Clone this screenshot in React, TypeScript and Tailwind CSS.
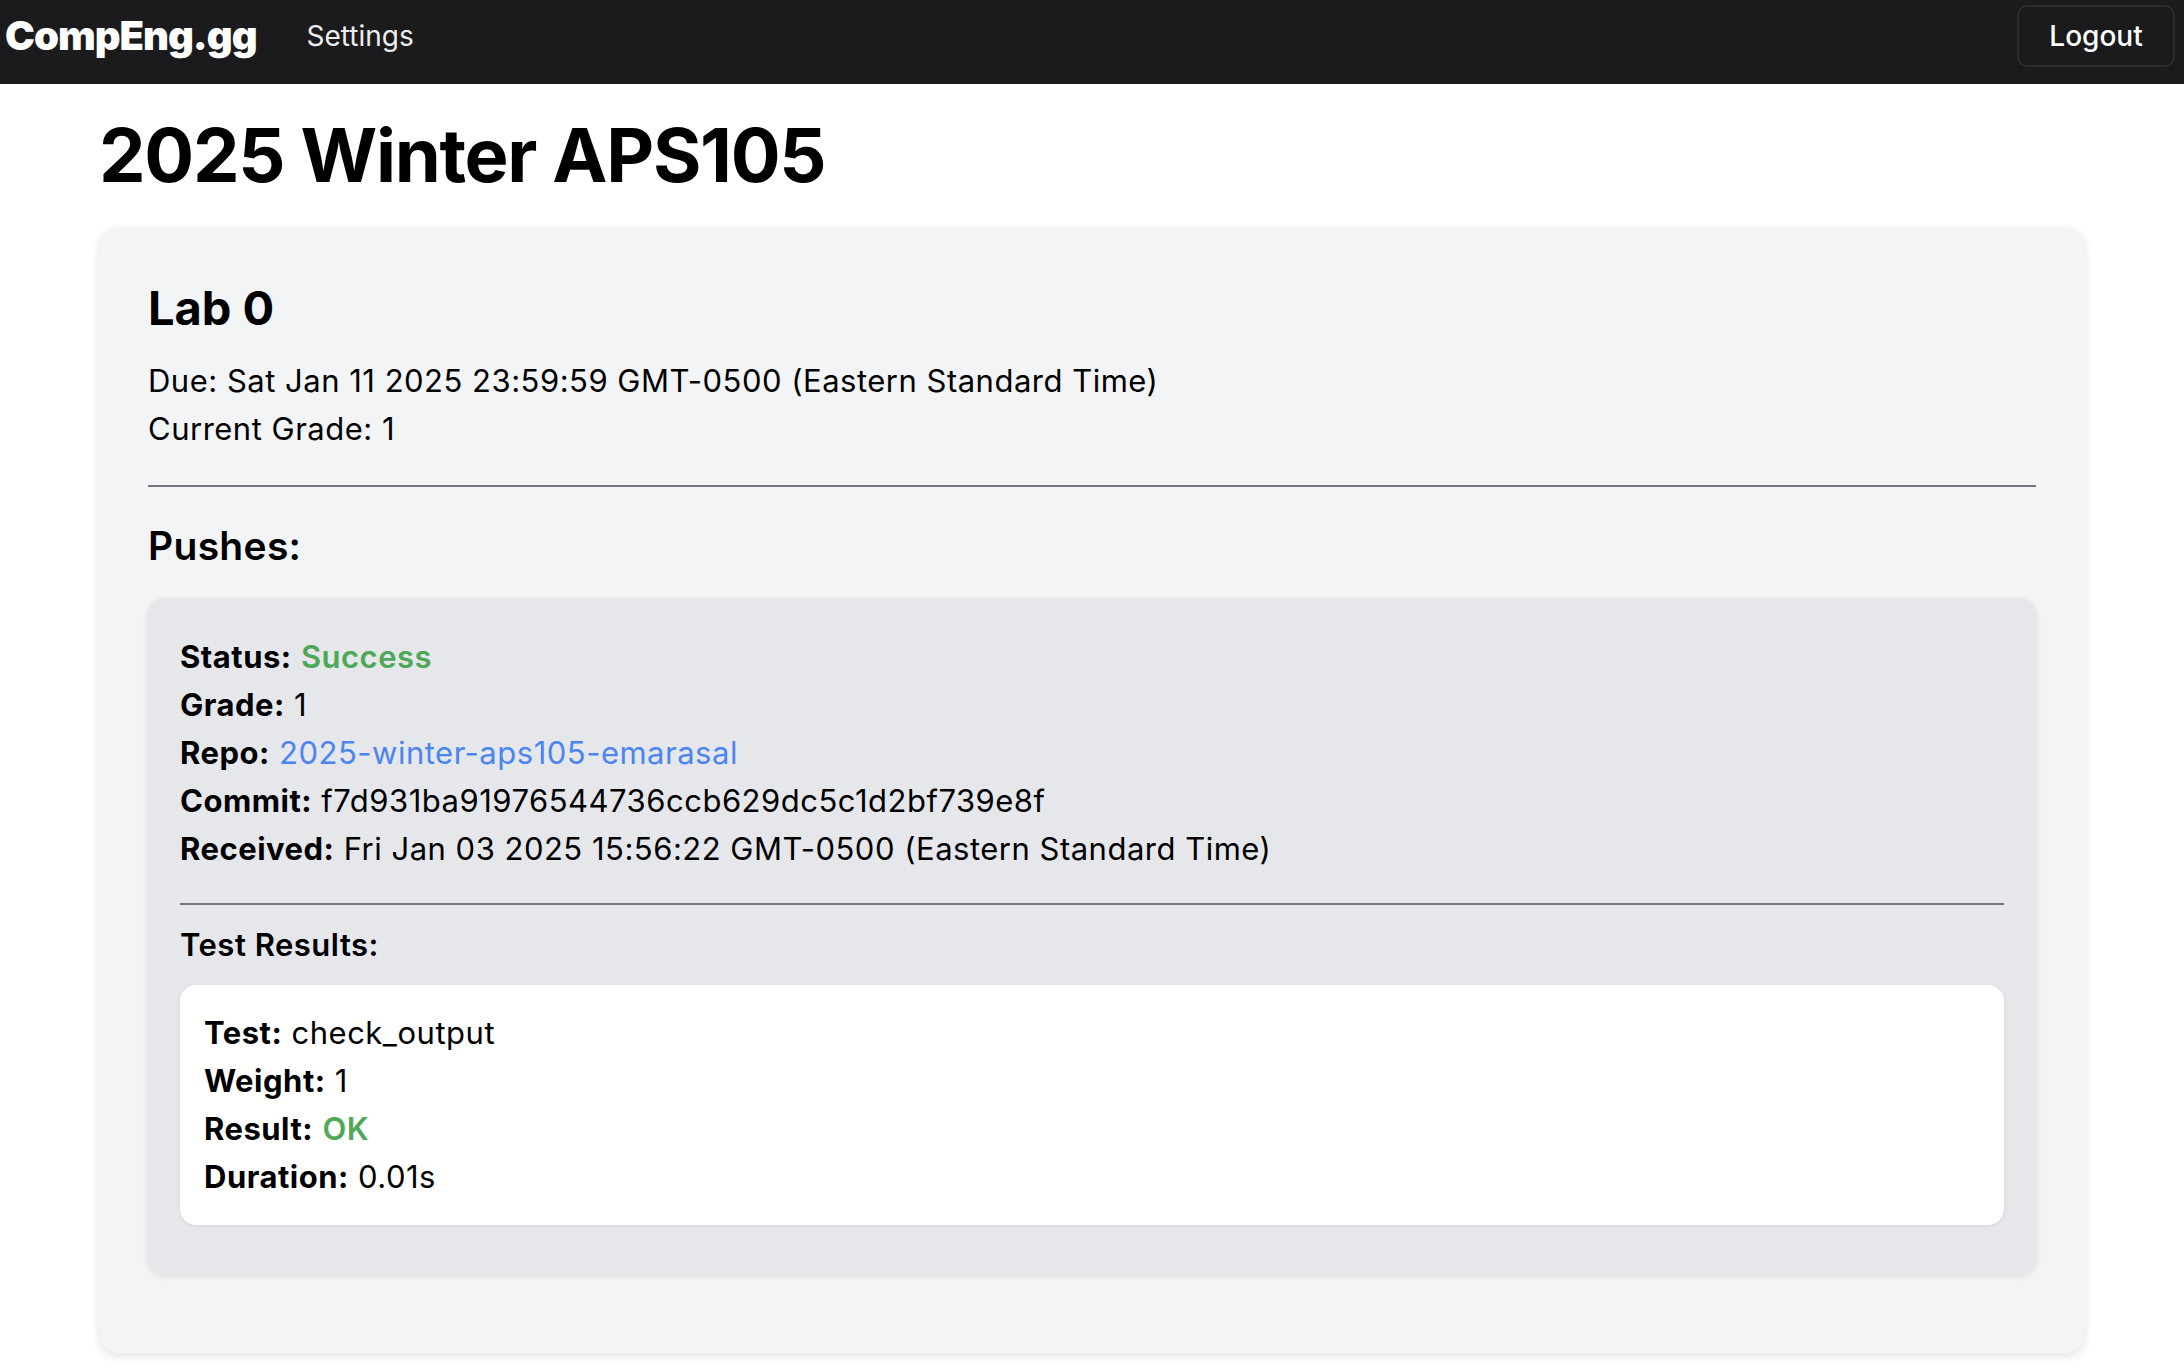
import React from 'react';

const push = {
    status: 'Success',
    grade: 1,
    repo: '2025-winter-aps105-emarasal',
    commit: 'f7d931ba91976544736ccb629dc5c1d2bf739e8f',
    received: 'Fri Jan 03 2025 15:56:22 GMT-0500 (Eastern Standard Time)',
    tests: [
        { name: 'check_output', weight: 1, result: 'OK', duration: '0.01s' }
    ]
};

const Field = ({ label, children }: { label: string, children: React.ReactNode }) => (
    <div>
        <span className="font-bold">{label}:</span> {children}
    </div>
);

const Navbar = () => (
    <nav className="h-[84px] bg-[#1b1b1d] pt-[5px] pl-[5px] pr-[9px]">
        <div className="flex h-[62px] items-center justify-between">
            <div className="flex items-center gap-[50px]">
                <a href="#" className="text-[40px] font-black tracking-tight text-white">CompEng.gg</a>
                <a href="#" className="text-[28px] text-[#ececec]">Settings</a>
            </div>
            <button className="h-[62px] w-[158px] rounded-[10px] border-2 border-[#2c2c2e] text-[28px] font-medium text-white">
                Logout
            </button>
        </div>
    </nav>
);

const App = () => {
    return (
        <div className="min-h-screen bg-white text-black font-[family-name:Inter,sans-serif]">
            <Navbar />

            <main className="mx-auto w-[1986px]">
                <h1 className="mt-[30px] mb-[32px] text-[74px] leading-[82px] font-bold tracking-[-1.3px]">2025 Winter APS105</h1>

                <section className="rounded-[20px] bg-[#f3f4f6] px-[49px] pt-[48px] pb-[79px] shadow-[0_3px_10px_rgba(0,0,0,0.12)]">
                    <h2 className="text-[47px] leading-[63px] font-bold">Lab 0</h2>
                    <div className="mt-[18px] text-[31px] leading-[48px] tracking-[0.5px]">
                        <p>Due: Sat Jan 11 2025 23:59:59 GMT-0500 (Eastern Standard Time)</p>
                        <p>Current Grade: 1</p>
                    </div>

                    <div className="mt-[32px] h-[2px] bg-[#72747f]" />

                    <h3 className="mt-[31px] text-[39px] leading-[55px] font-semibold tracking-[0.3px]">Pushes:</h3>

                    {/* Push card */}
                    <div className="mt-[25px] rounded-[16px] bg-[#e5e7eb] px-[32px] pt-[35px] pb-[49px] text-[31px] leading-[48px] tracking-[0.5px] shadow-[0_2px_6px_rgba(0,0,0,0.1)]">
                        <Field label="Status"><span className="font-semibold text-[#4ea857]">{push.status}</span></Field>
                        <Field label="Grade">{push.grade}</Field>
                        <Field label="Repo"><a href="#" className="text-[#4a85f2]">{push.repo}</a></Field>
                        <Field label="Commit">{push.commit}</Field>
                        <Field label="Received">{push.received}</Field>

                        <div className="mt-[30px] h-[2px] bg-[#72747f]" />

                        <h4 className="mt-[16px] font-semibold">Test Results:</h4>

                        {push.tests.map((t) => (
                            <div key={t.name} className="mt-[16px] rounded-[16px] bg-white p-[24px] shadow-[0_1px_4px_rgba(0,0,0,0.08)]">
                                <Field label="Test">{t.name}</Field>
                                <Field label="Weight">{t.weight}</Field>
                                <Field label="Result"><span className="font-semibold text-[#4ea857]">{t.result}</span></Field>
                                <Field label="Duration">{t.duration}</Field>
                            </div>
                        ))}
                    </div>
                </section>
            </main>
        </div>
    );
};

export default App;
